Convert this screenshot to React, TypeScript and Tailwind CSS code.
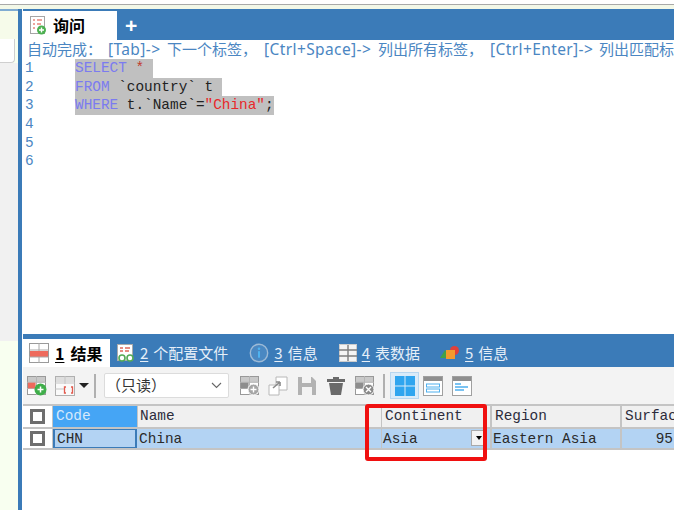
const sans = "font-['Noto_Sans_CJK_SC','Noto_Sans',sans-serif]";

function Grid({ x = 0, y = 0, s = 20, fill = '#777' }: { x?: number; y?: number; s?: number; fill?: string }) {
  return (
    <g transform={`translate(${x} ${y})`}>
      <rect x="0.5" y="0.5" width={s - 1} height={s - 1} fill="#fff" stroke="#999" />
      <rect x="1" y="1" width={s - 2} height={s * 0.28} fill="#c9c9c9" />
      <path d={`M${s / 2} 0V${s}M0 ${s * 0.33}H${s}M0 ${s * 0.66}H${s}`} stroke="#b5b5b5" />
      <rect x="1" y={s * 0.35} width={s * 0.4} height={s * 0.3} fill={fill} />
    </g>
  );
}

function Svg({ w = 22, h = 22, children }: { w?: number; h?: number; children: React.ReactNode }) {
  return <svg width={w} height={h} viewBox={`0 0 ${w} ${h}`} className="block shrink-0">{children}</svg>;
}

function QueryIcon() {
  return (
    <Svg w={16} h={19}>
      <rect x="0.5" y="0.5" width="14" height="17" fill="#fff" stroke="#a5a5a5" />
      <path d="M3 4h2M7 4h5M3 8h2M7 8h4M3 12h2" stroke="#e8877c" strokeWidth="1.3" />
      <circle cx="11.5" cy="14" r="4.5" fill="#4cb050" />
      <path d="M9 14h5M11.5 11.5v5" stroke="#fff" strokeWidth="1.4" />
    </Svg>
  );
}

function BottomTab({ n, label, icon, gap = 'mr-[21px]' }: { n: string; label: string; icon: React.ReactNode; gap?: string }) {
  return (
    <div className={`flex items-center ${gap} text-[15px] text-[#e6eff8] ${sans}`}>
      {icon}
      <span className="ml-[5px] underline underline-offset-2">{n}</span>
      <span className="ml-[5px]">{label}</span>
    </div>
  );
}

function ToolSep() {
  return <div className="w-[2px] h-[24px] bg-[#b0b0b0]" />;
}

function Cb() {
  return <div className="w-[15px] h-[15px] border-[3px] border-[#6e6e6e] bg-white" />;
}

const mono = "font-['Liberation_Mono',monospace] text-[14.4px] leading-none";
const hintLatin = "inline-block shrink-0 font-['Noto_Sans',sans-serif] text-[15.5px] tracking-[0.4px]";
const hintCjk = 'inline-block shrink-0';

export default function App() {
  return (
    <div className="w-[674px] h-[510px] overflow-hidden relative bg-white flex flex-col">
      <div className="h-[4px] bg-white shrink-0" />
      <div className="h-[1px] bg-[#a9a9a9] shrink-0" />
      <div className="h-[4px] bg-[#f3f8e8] shrink-0" />
      <div className="flex flex-1 min-h-0">
        <div className="w-[18px] shrink-0 flex flex-col bg-[#f8fff0]">
          <div className="h-[2px] bg-[#7fabd2] shrink-0" />
          <div className="h-[28px] bg-[#f6fbea] shrink-0" />
          <div className="w-[15px] h-[24px] bg-white border-b border-r border-[#cfcfcf] shrink-0 rounded-br-sm" />
          <div className="h-[278px] bg-[#f1f1f1] shrink-0" />
        </div>
        <div className="w-[4px] shrink-0 bg-[#3b7bb8]" />
        <div className="w-[1px] shrink-0 bg-white" />
        <div className="flex-1 min-w-0 flex flex-col">
          <div className="h-[31px] shrink-0 bg-[#3b7bb8] flex items-end">
            <div className="w-[94px] h-[29px] bg-white flex items-center pl-[7px]">
              <QueryIcon />
              <span className={`ml-[7px] mb-[2px] text-[16px] font-bold text-black ${sans}`}>询问</span>
            </div>
            <span className={`ml-[8px] mb-[4px] text-white text-[21px] font-bold leading-none font-['Liberation_Sans',sans-serif]`}>+</span>
          </div>
          <div className={`h-[18px] shrink-0 overflow-hidden whitespace-nowrap text-[15px] leading-[18px] pl-[4px] text-[#4b86c2] flex ${sans}`}>
            <span className={`${hintCjk} w-[81px]`}>自动完成：</span>
            <span className={`${hintLatin} w-[59px]`}>[Tab]-&gt;</span>
            <span className={`${hintCjk} w-[97px]`}>下一个标签，</span>
            <span className={`${hintLatin} w-[114px]`}>[Ctrl+Space]-&gt;</span>
            <span className={`${hintCjk} w-[112px]`}>列出所有标签，</span>
            <span className={`${hintLatin} w-[109px]`}>[Ctrl+Enter]-&gt;</span>
            <span className={hintCjk}>列出匹配标签</span>
          </div>
          <div className={`h-[276px] shrink-0 pt-[1px] font-['Liberation_Mono',monospace] text-[14.4px] leading-[18.67px] whitespace-pre`}>
            {[
              <span className="bg-[#c0c0c0]"><span className="text-[#7b7bf0]">SELECT</span> <span className="text-[#c0392b]">*</span> </span>,
              <span className="bg-[#c0c0c0]"><span className="text-[#7b7bf0]">FROM</span><span className="text-[#222]"> `country` t </span></span>,
              <span className="bg-[#c0c0c0]"><span className="text-[#7b7bf0]">WHERE</span><span className="text-[#222]"> t.`Name`=</span><span className="text-[#e8282a]">"China"</span><span className="text-[#222]">;</span></span>,
              null, null, null,
            ].map((c, i) => (
              <div key={i} className="flex h-[18.67px]">
                <span className="w-[52px] pl-[2px] text-[#4b86c2]">{i + 1}</span>
                {c}
              </div>
            ))}
          </div>
          <div className="h-[33px] shrink-0 bg-[#3b7bb8] flex items-end">
            <div className={`w-[87px] h-[28px] bg-white flex items-center pl-[6px] pb-[1px] text-[16px] font-bold text-black ${sans}`}>
              <Svg w={20} h={20}>
                <rect x="0.5" y="0.5" width="19" height="19" fill="#fff" stroke="#9a9a9a" />
                <rect x="1" y="8" width="18" height="6" fill="#ee6a5c" />
                <path d="M10 0V8M10 14V20M0 7H20M0 14H20" stroke="#a8a8a8" />
              </Svg>
              <span className="ml-[6px] underline underline-offset-2">1</span>
              <span className="ml-[6px]">结果</span>
            </div>
            <div className="flex items-center h-[28px] ml-[7px]">
              <BottomTab n="2" label="个配置文件" icon={
                <Svg w={18} h={20}>
                  <rect x="0.5" y="1.5" width="15" height="16" fill="#fff" stroke="#aaa" />
                  <path d="M3 5h3M8 5h5M3 8h3M8 8h4" stroke="#e0685a" strokeWidth="1.3" />
                  <circle cx="5" cy="15" r="3" fill="#fff" stroke="#55aa55" strokeWidth="1.6" />
                  <circle cx="13" cy="15" r="3" fill="#fff" stroke="#55aa55" strokeWidth="1.6" />
                </Svg>
              } />
              <BottomTab n="3" label="信息" icon={
                <Svg w={20} h={20}>
                  <circle cx="10" cy="10" r="8.7" fill="#4a88c2" stroke="#9dbad6" strokeWidth="1.4" />
                  <circle cx="10" cy="5.8" r="1.3" fill="#4fb3f0" />
                  <rect x="9" y="8.2" width="2" height="6.5" fill="#4fb3f0" />
                </Svg>
              } />
              <BottomTab n="4" label="表数据" icon={
                <Svg w={18} h={18}>
                  <rect x="0.5" y="0.5" width="17" height="17" fill="#f4f4f4" stroke="#ccc" />
                  <path d="M9 1V17M0 6H18M0 12H18" stroke="#7d7d7d" strokeWidth="1.4" />
                </Svg>
              } />
              <BottomTab n="5" label="信息" gap="-ml-[1px]" icon={
                <Svg w={20} h={18}>
                  <path d="M0 14L5 6L10 14Z" fill="#43a047" />
                  <circle cx="14.5" cy="6.5" r="4.5" fill="#e0403a" />
                  <rect x="6" y="6" width="9" height="9" fill="#f39a2e" />
                </Svg>
              } />
            </div>
          </div>
          <div className="h-[37px] shrink-0 bg-[#f3f3f3] flex items-center pl-[4px]">
            <Svg w={20} h={20}>
              <Grid s={19} fill="#ee6a5c" />
              <circle cx="13.5" cy="13.5" r="6" fill="#3fae4a" />
              <path d="M10.5 13.5h6M13.5 10.5v6" stroke="#fff" strokeWidth="1.5" />
            </Svg>
            <div className="ml-[8px]">
              <Svg w={20} h={20}>
                <rect x="0.5" y="0.5" width="19" height="19" fill="#fafafa" stroke="#b0b0b0" />
                <rect x="1" y="1" width="18" height="5" fill="#dedede" />
                <path d="M10 0V8M0 7H20M0 13H10" stroke="#c4c4c4" />
                <path d="M11 11H9.5V17H11M16 11H17.5V17H16" fill="none" stroke="#e25a4e" strokeWidth="1.3" />
              </Svg>
            </div>
            <div className="ml-[4px] w-0 h-0 border-x-[5px] border-x-transparent border-t-[5px] border-t-[#222]" />
            <div className="ml-[5px]"><ToolSep /></div>
            <div className={`ml-[8px] w-[125px] h-[25px] bg-white border border-[#dcdcdc] rounded-[2px] flex items-center justify-between pr-[6px] text-[15px] text-[#333] ${sans}`}>
              <span className="ml-[1px]">（只读）</span>
              <svg width="11" height="7" viewBox="0 0 11 7"><path d="M1 1L5.5 5.5L10 1" fill="none" stroke="#666" strokeWidth="1.1" /></svg>
            </div>
            <div className="ml-[11px]">
              <Svg w={20} h={20}>
                <Grid s={19} fill="#8d8d8d" />
                <circle cx="13.5" cy="13.5" r="5.5" fill="#a5a5a5" stroke="#fff" />
                <path d="M10.5 13.5h6M13.5 10.5v6" stroke="#fff" strokeWidth="1.4" />
              </Svg>
            </div>
            <div className="ml-[8px]">
              <Svg w={20} h={20}>
                <path d="M8 1H19V14H8Z" fill="#fff" stroke="#b8b8b8" />
                <path d="M1 9H11V19H1Z" fill="#fff" stroke="#b8b8b8" />
                <path d="M5 12L12 6M12 6V10M12 6H8" fill="none" stroke="#8a8a8a" strokeWidth="1.6" />
              </Svg>
            </div>
            <div className="ml-[9px]">
              <Svg w={20} h={20}>
                <path d="M1 1H15L19 5V19H1Z" fill="#b2b2b2" />
                <rect x="5" y="1" width="9" height="6" fill="#f3f3f3" />
                <rect x="5" y="11" width="10" height="8" fill="#f3f3f3" />
              </Svg>
            </div>
            <div className="ml-[9px]">
              <Svg w={20} h={20}>
                <path d="M7 1H13V3H19V6H1V3H7Z" fill="#6a6a6a" />
                <path d="M3 7H17L15 19H5Z" fill="#6a6a6a" />
              </Svg>
            </div>
            <div className="ml-[9px]">
              <Svg w={20} h={20}>
                <Grid s={19} fill="#8d8d8d" />
                <circle cx="13.5" cy="13.5" r="5.5" fill="#8a8a8a" stroke="#fff" />
                <path d="M11 11l5 5M16 11l-5 5" stroke="#fff" strokeWidth="1.4" />
              </Svg>
            </div>
            <div className="ml-[8px]"><ToolSep /></div>
            <div className="ml-[5px] w-[29px] h-[27px] bg-[#d9ebf9] border border-[#b7d6ef] flex items-center justify-center">
              <Svg w={20} h={20}>
                <rect x="0" y="0" width="9.5" height="9.5" fill="#2fa5ef" />
                <rect x="10.5" y="0" width="9.5" height="9.5" fill="#2fa5ef" />
                <rect x="0" y="10.5" width="9.5" height="9.5" fill="#2fa5ef" />
                <rect x="10.5" y="10.5" width="9.5" height="9.5" fill="#2fa5ef" />
              </Svg>
            </div>
            <div className="ml-[4px]">
              <Svg w={20} h={20}>
                <rect x="0.5" y="0.5" width="19" height="19" fill="#fff" stroke="#a0a0a0" />
                <rect x="1" y="1" width="18" height="4" fill="#8f8f8f" />
                <rect x="3.5" y="8" width="13" height="3" fill="#fff" stroke="#4fb0ee" />
                <rect x="3.5" y="13" width="13" height="3" fill="#fff" stroke="#4fb0ee" />
              </Svg>
            </div>
            <div className="ml-[9px]">
              <Svg w={20} h={20}>
                <rect x="0.5" y="0.5" width="19" height="19" fill="#fff" stroke="#a0a0a0" />
                <rect x="1" y="1" width="18" height="4" fill="#8f8f8f" />
                <path d="M3 8H9M3 11H16M3 14H12" stroke="#4fb0ee" strokeWidth="1.4" />
              </Svg>
            </div>
          </div>
          <div className={`h-[23px] shrink-0 flex whitespace-nowrap overflow-hidden border-t-2 border-[#c4c4c4] bg-[#f0f0f0] text-[#2c2c3c] ${mono}`}>
            <div className="w-[30px] shrink-0 bg-white flex items-center justify-center border-r border-[#c4c4c4]"><Cb /></div>
            <div className="w-[84px] shrink-0 bg-[#45a5f5] text-[#d5e9fb] flex items-center pl-[3px]">Code</div>
            <div className="w-[244px] shrink-0 flex items-center pl-[2px] border-l border-[#c4c4c4]">Name</div>
            <div className="w-[1px] shrink-0 bg-[#c4c4c4]" />
            <div className="w-[110px] shrink-0 flex items-center pl-[3px] border-r-2 border-[#c4c4c4]">Continent</div>
            <div className="w-[130px] shrink-0 flex items-center pl-[3px] border-r-2 border-[#c4c4c4]">Region</div>
            <div className="w-[60px] shrink-0 flex items-center pl-[3px]">Surfac</div>
          </div>
          <div className={`h-[23px] shrink-0 flex whitespace-nowrap overflow-hidden border-y-2 border-[#c4c4c4] bg-[#b3d3f3] text-[#2a2a2a] ${mono}`}>
            <div className="w-[30px] shrink-0 bg-white flex items-center justify-center border-r border-[#c4c4c4]"><Cb /></div>
            <div className="w-[84px] shrink-0 flex items-center pl-[2px] pt-[1px] border-2 border-[#3b7bb8] -my-[1px]">CHN</div>
            <div className="w-[244px] shrink-0 flex items-center pl-[2px] pt-[1px]">China</div>
            <div className="w-[1px] shrink-0 bg-[#c4c4c4]" />
            <div className="w-[110px] shrink-0 flex items-center pl-[1px] pt-[1px] border-r-2 border-[#c4c4c4] relative">
              Asia
              <div className="absolute right-[3px] top-[1px] w-[16px] h-[16px] bg-[#f3f3f3] border border-[#aaa] flex items-center justify-center">
                <div className="w-0 h-0 border-x-[3px] border-x-transparent border-t-[4px] border-t-black" />
              </div>
            </div>
            <div className="w-[130px] shrink-0 flex items-center pl-[1px] pt-[1px] border-r-2 border-[#c4c4c4]">Eastern Asia</div>
            <div className="w-[60px] shrink-0 flex items-center justify-end pr-[9px] pt-[1px]">95</div>
          </div>
        </div>
      </div>
      <div className="absolute left-[365px] top-[404px] w-[122px] h-[57px] border-[4px] border-[#f01010] rounded-[3px]" />
    </div>
  );
}
